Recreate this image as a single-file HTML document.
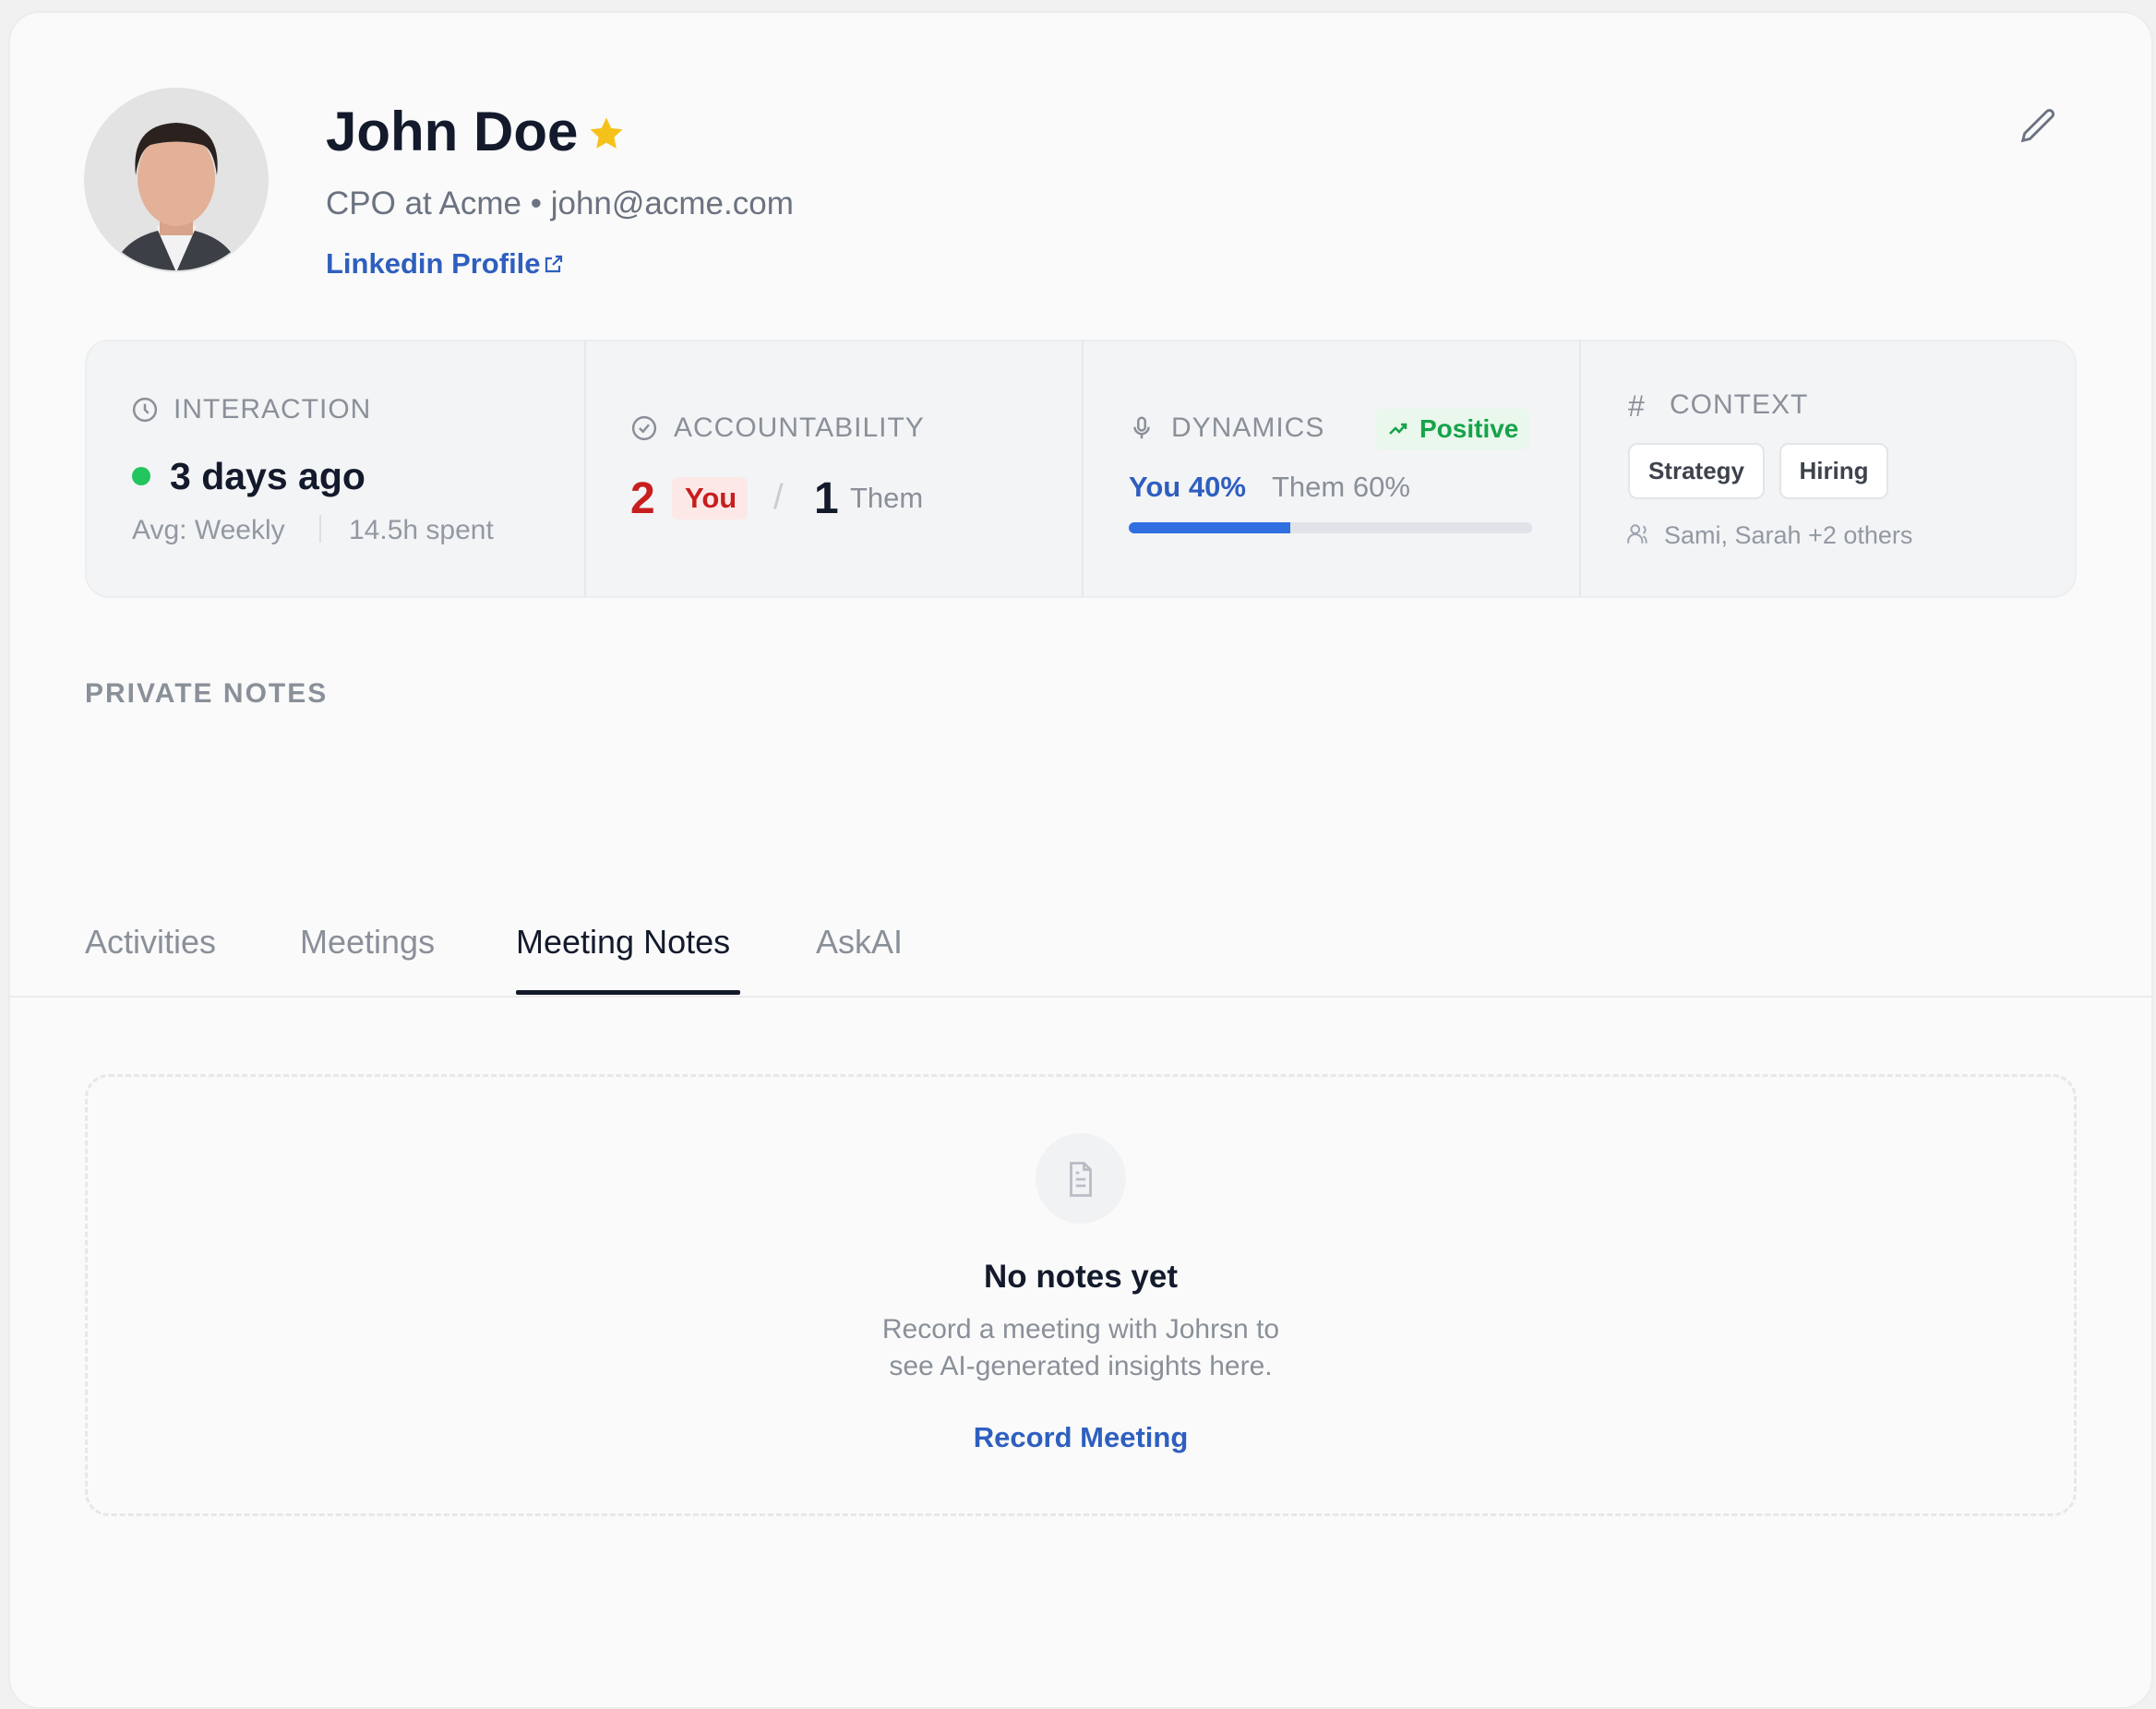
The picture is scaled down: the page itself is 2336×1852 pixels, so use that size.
<!DOCTYPE html>
<html><head><meta charset="utf-8"><style>
*{box-sizing:border-box;margin:0;padding:0}
body{width:2336px;height:1824px;background:#f1f1f1;font-family:"Liberation Sans",Arial,sans-serif;position:relative;overflow:hidden}
.card{position:absolute;left:9px;top:12px;width:2324px;height:1840px;background:#fafafa;border:2px solid #ececec;border-radius:34px}
.a{position:absolute;white-space:nowrap}
.lbl{font-size:30px;color:#8a9099;letter-spacing:1px}
</style></head><body>
<div class="card"></div>
<!-- avatar -->
<svg class="a" style="left:91px;top:95px" width="200" height="200" viewBox="0 0 200 200">
<defs><clipPath id="c"><circle cx="100" cy="100" r="98"/></clipPath></defs>
<circle cx="100" cy="100" r="100" fill="#e3e3e3"/>
<g clip-path="url(#c)">
<path d="M30 200 Q40 165 80 155 L120 155 Q160 165 170 200Z" fill="#3c3f46"/>
<path d="M78 150 L100 200 L122 150Z" fill="#f2f2f2"/>
<rect x="82" y="120" width="36" height="40" fill="#d7a38a"/>
<ellipse cx="100" cy="98" rx="42" ry="52" fill="#e2b198"/>
<path d="M56 95 Q50 40 100 38 Q150 40 144 95 Q140 65 128 62 Q100 55 72 62 Q60 68 56 95Z" fill="#2b2220"/>
</g></svg>
<div class="a" style="left:353px;top:108px;font-size:60px;font-weight:bold;color:#131a2c">John Doe</div>
<svg class="a" style="left:636px;top:124px" width="42" height="42" viewBox="0 0 24 24"><path d="M12 2l3 6.5 7 .8-5.2 4.8 1.4 7L12 17.6 5.8 21.1l1.4-7L2 9.3l7-.8z" fill="#f5c21b"/></svg>
<div class="a" style="left:353px;top:201px;font-size:35px;color:#6b7280">CPO at Acme • john@acme.com</div>
<div class="a" style="left:353px;top:268px;font-size:31px;color:#2e5fbf;font-weight:bold">Linkedin Profile</div>
<svg class="a" style="left:588px;top:274px" width="24" height="24" viewBox="0 0 24 24" fill="none" stroke="#2e5fbf" stroke-width="2.2"><path d="M14 4h6v6M20 4l-9 9M18 14v6H4V6h6"/></svg>
<svg class="a" style="left:2186px;top:114px" width="46" height="46" viewBox="0 0 24 24" fill="none" stroke="#6b7280" stroke-width="1.5"><path d="M16.5 3.5a2.1 2.1 0 013 3L7 19l-4 1 1-4z"/></svg>

<!-- stats -->
<div class="a" style="left:92px;top:368px;width:2158px;height:280px;background:#f3f4f5;border:2px solid #eceef0;border-radius:26px"></div>
<div class="a" style="left:633px;top:369px;width:2px;height:278px;background:#e6e8eb"></div>
<div class="a" style="left:1172px;top:369px;width:2px;height:278px;background:#e6e8eb"></div>
<div class="a" style="left:1711px;top:369px;width:2px;height:278px;background:#e6e8eb"></div>

<svg class="a" style="left:142px;top:429px" width="30" height="30" viewBox="0 0 24 24" fill="none" stroke="#8a9099" stroke-width="2"><circle cx="12" cy="12" r="9.5"/><path d="M12 7v5l3 3"/></svg>
<div class="a lbl" style="left:188px;top:427px">INTERACTION</div>
<div class="a" style="left:143px;top:506px;width:20px;height:20px;border-radius:50%;background:#22c55e"></div>
<div class="a" style="left:184px;top:493px;font-size:41px;color:#131a2c;font-weight:bold">3 days ago</div>
<div class="a" style="left:143px;top:558px;font-size:30px;color:#9299a3">Avg: Weekly</div>
<div class="a" style="left:346px;top:558px;width:2px;height:30px;background:#dcdfe3"></div>
<div class="a" style="left:378px;top:558px;font-size:30px;color:#9299a3">14.5h spent</div>

<svg class="a" style="left:683px;top:449px" width="30" height="30" viewBox="0 0 24 24" fill="none" stroke="#8a9099" stroke-width="2"><circle cx="12" cy="12" r="9.5"/><path d="M8 12l3 3 5-6"/></svg>
<div class="a lbl" style="left:730px;top:447px">ACCOUNTABILITY</div>
<div class="a" style="left:683px;top:513px;font-size:48px;color:#c81e1e;font-weight:bold">2</div>
<div class="a" style="left:728px;top:517px;width:82px;height:46px;background:#fde8e8;border-radius:6px"></div>
<div class="a" style="left:742px;top:522px;font-size:31px;color:#c81e1e;font-weight:bold">You</div>
<div class="a" style="left:838px;top:518px;font-size:38px;color:#c9ccd1">/</div>
<div class="a" style="left:882px;top:513px;font-size:48px;color:#131a2c;font-weight:bold">1</div>
<div class="a" style="left:921px;top:522px;font-size:31px;color:#8a9099">Them</div>

<svg class="a" style="left:1222px;top:449px" width="30" height="30" viewBox="0 0 24 24" fill="none" stroke="#8a9099" stroke-width="2"><rect x="9" y="3" width="6" height="11" rx="3"/><path d="M6 11a6 6 0 0012 0M12 17v4"/></svg>
<div class="a lbl" style="left:1269px;top:447px">DYNAMICS</div>
<div class="a" style="left:1490px;top:443px;width:167px;height:44px;background:#e9f7ec;border-radius:6px"></div>
<svg class="a" style="left:1502px;top:453px" width="26" height="24" viewBox="0 0 24 24" fill="none" stroke="#16a34a" stroke-width="2.5"><path d="M3 17l6-6 4 4 7-8M15 7h5v5"/></svg>
<div class="a" style="left:1538px;top:449px;font-size:28px;color:#16a34a;font-weight:bold">Positive</div>
<div class="a" style="left:1223px;top:510px;font-size:31px;color:#2e5fbf;font-weight:bold">You 40%</div>
<div class="a" style="left:1378px;top:510px;font-size:31px;color:#8a9099">Them 60%</div>
<div class="a" style="left:1223px;top:566px;width:437px;height:12px;background:#e0e3e7;border-radius:6px"></div>
<div class="a" style="left:1223px;top:566px;width:175px;height:12px;background:#2f6fe0;border-radius:6px 0 0 6px"></div>

<div class="a lbl" style="left:1764px;top:422px;font-size:32px">#</div>
<div class="a lbl" style="left:1809px;top:422px">CONTEXT</div>
<div class="a" style="left:1764px;top:480px;width:148px;height:61px;background:#fff;border:2px solid #e3e5e8;border-radius:10px;font-size:26px;font-weight:bold;color:#3d434c;text-align:center;line-height:57px">Strategy</div>
<div class="a" style="left:1928px;top:480px;width:118px;height:61px;background:#fff;border:2px solid #e3e5e8;border-radius:10px;font-size:26px;font-weight:bold;color:#3d434c;text-align:center;line-height:57px">Hiring</div>
<svg class="a" style="left:1762px;top:566px" width="26" height="26" viewBox="0 0 24 24" fill="none" stroke="#9ca3af" stroke-width="1.8"><circle cx="9" cy="7" r="4"/><path d="M2 21v-2a6 6 0 0114 0v2M17 4a4 4 0 010 7M20 21v-2a6 6 0 00-3-5"/></svg>
<div class="a" style="left:1803px;top:565px;font-size:27px;color:#9299a3">Sami, Sarah +2 others</div>

<div class="a lbl" style="left:92px;top:735px;font-weight:bold;letter-spacing:2px">PRIVATE NOTES</div>

<div class="a" style="left:92px;top:1000px;font-size:36px;color:#8a9099">Activities</div>
<div class="a" style="left:325px;top:1000px;font-size:36px;color:#8a9099">Meetings</div>
<div class="a" style="left:559px;top:1000px;font-size:36px;color:#131a2c">Meeting Notes</div>
<div class="a" style="left:884px;top:1000px;font-size:36px;color:#8a9099">AskAI</div>
<div class="a" style="left:11px;top:1079px;width:2320px;height:2px;background:#ececec"></div>
<div class="a" style="left:559px;top:1073px;width:243px;height:5px;background:#131a2c;border-radius:2px"></div>

<div class="a" style="left:92px;top:1164px;width:2158px;height:479px;border:3px dashed #e5e7ea;border-radius:26px"></div>
<div class="a" style="left:1122px;top:1228px;width:98px;height:98px;border-radius:50%;background:#f1f2f4"></div>
<svg class="a" style="left:1150px;top:1255px" width="42" height="46" viewBox="0 0 24 24" fill="none" stroke="#b8bdc5" stroke-width="1.6"><path d="M14 2H6v20h12V6zM14 2v4h4M9 12h6M9 16h6M9 8h2"/></svg>
<div class="a" style="left:0;width:2342px;top:1364px;text-align:center;font-size:35px;font-weight:bold;color:#131a2c">No notes yet</div>
<div class="a" style="left:0;width:2342px;top:1421px;text-align:center;font-size:30px;color:#8a9099;line-height:40px">Record a meeting with Johrsn to<br>see AI-generated insights here.</div>
<div class="a" style="left:0;width:2342px;top:1540px;text-align:center;font-size:31px;color:#2e5fbf;font-weight:bold">Record Meeting</div>
</body></html>
